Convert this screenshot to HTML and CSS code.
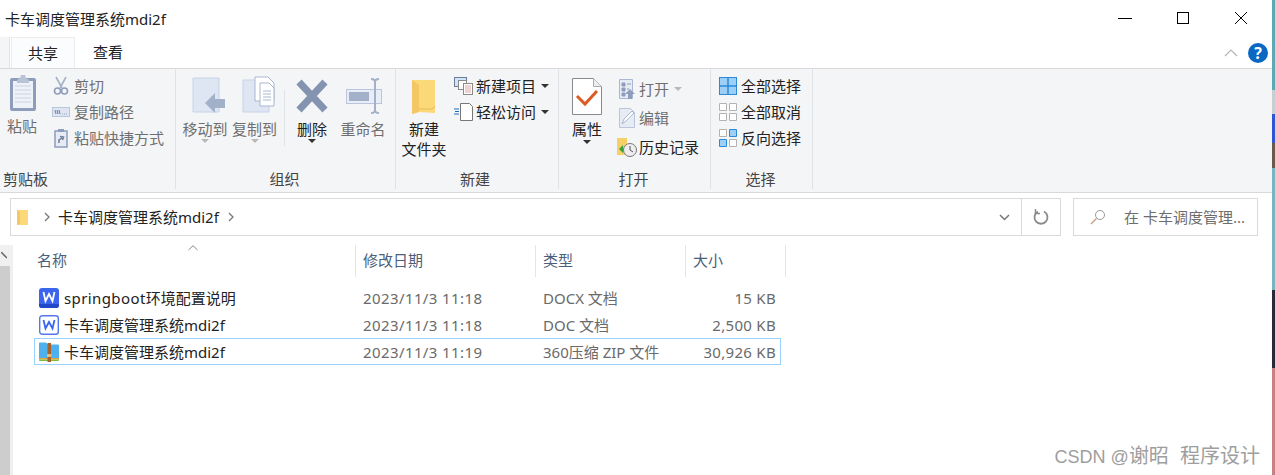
FILE: index.html
```html
<!DOCTYPE html>
<html lang="zh-CN">
<head>
    <meta charset="UTF-8">
    <title>卡车调度管理系统mdi2f</title>
    <link rel="stylesheet" href="styles.css">
</head>
<body>
    <div class="desktop">
        <div class="window">
            <div class="titlebar">
                <span class="title">卡车调度管理系统mdi2f</span>
                <div class="controls">
                    <svg width="58" height="24" viewBox="0 0 58 24"><path d="M22 12.5h14" stroke="#000" stroke-width="1"/></svg>
                    <svg width="58" height="24" viewBox="0 0 58 24"><rect x="23.5" y="6.5" width="11" height="11" fill="none" stroke="#000"/></svg>
                    <svg width="58" height="24" viewBox="0 0 58 24"><path d="M23 6l12 12M35 6L23 18" stroke="#000" fill="none"/></svg>
                </div>
            </div>

            <div class="tabs">
                <div class="tab-stub"></div>
                <div class="tab active">共享</div>
                <div class="tab">查看</div>
                <div class="tabs-right">
                    <svg width="14" height="8" viewBox="0 0 14 8"><path d="M1 7l6-6 6 6" fill="none" stroke="#b5b5b5" stroke-width="1.2"/></svg>
                    <span class="help">?</span>
                </div>
            </div>

            <div class="ribbon">
                <section class="group group-clip">
                    <div class="group-body">
                        <div class="big big-paste">
                            <svg width="28" height="38" viewBox="0 0 28 38"><rect x="1" y="4" width="26" height="33" rx="2" fill="#8d9dbb"/><rect x="4" y="7" width="20" height="27" fill="#eef1f7"/><path d="M6 12h16M6 16h16M6 20h16M6 24h16M6 28h16" stroke="#ccd4e4"/><path d="M8 6l3-2 1-3h4l1 3 3 2v3H8z" fill="#b9c3d6"/></svg>
                            <span class="muted">粘贴</span>
                        </div>
                        <div class="small-col">
                            <div class="small muted">
                                <svg width="16" height="20" viewBox="0 0 16 20"><path d="M3 1l6 11M13 1L7 12" stroke="#a6b2c8" stroke-width="1.6" fill="none"/><circle cx="4.5" cy="15" r="3" fill="none" stroke="#8d9dbb" stroke-width="1.6"/><circle cx="11.500" cy="15" r="3" fill="none" stroke="#8d9dbb" stroke-width="1.6"/></svg>
                                剪切
                            </div>
                            <div class="small muted">
                                <svg width="18" height="12" viewBox="0 0 18 12"><rect x=".5" y="1.500" width="17" height="9" fill="#dfe6f2" stroke="#b9c5da"/><path d="M3 4l1 4M5 4l1 4M7 4l1 4" stroke="#6d7d99"/><path d="M10 8h1M12 8h1M14 8h1" stroke="#8d9dbb"/></svg>
                                复制路径
                            </div>
                            <div class="small muted">
                                <svg width="14" height="20" viewBox="0 0 14 20"><rect x="1" y="3" width="12" height="16" fill="#e6ebf4" stroke="#8d9dbb" stroke-width="1.500"/><rect x="4" y="1" width="6" height="3" fill="#8d9dbb"/><path d="M5 15v-3l3-2M6 8.500l3.500.5-1 3" fill="none" stroke="#6d7d99" stroke-width="1.500"/></svg>
                                粘贴快捷方式
                            </div>
                        </div>
                    </div>
                    <div class="group-label group-label-left">剪贴板</div>
                </section>

                <section class="group group-org">
                    <div class="group-body">
                        <div class="big big-org muted">
                            <svg class="shift" width="36" height="40" viewBox="0 0 36 40"><path d="M2 2h26v34H2z" fill="#dfe6f3" stroke="#c7d3e6"/><path d="M14 27l10-10v6h10v9H24v5z" fill="#a2b0ca"/></svg>
                            <span>移动到</span>
                            <i class="caret caret-light"></i>
                        </div>
                        <div class="big big-org big-copy muted">
                            <svg class="shift" width="36" height="40" viewBox="0 0 36 40"><path d="M2 4h26v32H2z" fill="#dfe6f3" stroke="#c7d3e6"/><path d="M14 1h13l6 6v18H14z" fill="#fff" stroke="#a9b7d0"/><path d="M19 7h9l5 5v18H19z" fill="#fff" stroke="#a9b7d0"/><path d="M22 15h8M22 18h8M22 21h8M22 24h8" stroke="#a9b7d0"/></svg>
                            <span>复制到</span>
                            <i class="caret caret-light"></i>
                        </div>
                        <div class="vsep"></div>
                        <div class="big big-org big-del">
                            <svg width="34" height="40" viewBox="0 0 34 40"><path d="M4 6l26 28M30 6L4 34" stroke="#8494b0" stroke-width="7"/></svg>
                            <span>删除</span>
                            <i class="caret"></i>
                        </div>
                        <div class="big big-org muted">
                            <svg class="shift-small" width="38" height="40" viewBox="0 0 38 40"><rect x="1.500" y="13.500" width="35" height="14" fill="#e8edf7" stroke="#b9c5da"/><rect x="4" y="16" width="20" height="9" fill="#a2b0ca"/><path d="M26 3c3 0 4 1 4 3v28c0 2 1 3 4 3M34 3c-3 0-4 1-4 3M30 34c0 2-1 3-4 3" fill="none" stroke="#a2b0ca" stroke-width="2"/></svg>
                            <span>重命名</span>
                        </div>
                    </div>
                    <div class="group-label">组织</div>
                </section>

                <section class="group group-new">
                    <div class="group-body">
                        <div class="big big-folder">
                            <svg width="26" height="36" viewBox="0 0 26 36"><path d="M1 1h23v33l-16-1-7 2z" fill="#fbd978"/><path d="M8 6L1 1v34l7-2z" fill="#f3c763"/><path d="M24 27l-3 3H8" fill="none" stroke="#e7b955"/></svg>
                            <span>新建<br>文件夹</span>
                        </div>
                        <div class="small-col small-col-new">
                            <div class="small">
                                <svg width="20" height="18" viewBox="0 0 20 18"><rect x=".5" y=".5" width="12" height="9" fill="#cfe4f7" stroke="#6d7d99"/><rect x="4.500" y="3.500" width="8" height="9" fill="#fff" stroke="#8a8a8a"/><rect x="9.500" y="6.500" width="9" height="11" fill="#fff" stroke="#8a8a8a"/><path d="M11 9h6M11 11h6M11 13h6M11 15h6" stroke="#e0a5a5"/></svg>
                                新建项目<i class="caret caret-inline"></i>
                            </div>
                            <div class="small">
                                <svg width="20" height="18" viewBox="0 0 20 18"><path d="M6.500.5h9l3 3v14h-12z" fill="#fff" stroke="#777"/><path d="M0 6h5M1 8.500h4M0 11h5" stroke="#1b6fc2"/></svg>
                                轻松访问<i class="caret caret-inline"></i>
                            </div>
                        </div>
                    </div>
                    <div class="group-label">新建</div>
                </section>

                <section class="group group-open">
                    <div class="group-body">
                        <div class="big big-prop">
                            <svg width="30" height="37" viewBox="0 0 30 37"><path d="M.5.500h21l8 8v28H.5z" fill="#fff" stroke="#8a8a8a"/><path d="M21.500.500v8h8" fill="#eee" stroke="#aaa"/><path d="M5 18l8 8 12-13" fill="none" stroke="#dd5a25" stroke-width="3"/></svg>
                            <span>属性</span>
                            <i class="caret"></i>
                        </div>
                        <div class="small-col small-col-open">
                            <div class="small muted">
                                <svg width="16" height="20" viewBox="0 0 16 20"><path d="M.5.500h13v19H.5z" fill="#e6ebf4" stroke="#a9b7d0"/><path d="M3 4h3v3H3zM3 9h3v3H3zM3 14h3v3H3zM8 5h4M8 10h2" stroke="#8d9dbb" fill="#8d9dbb"/><path d="M11 10l5 5h-3v5H9v-5H6z" fill="#8d9dbb"/></svg>
                                打开<i class="caret caret-inline caret-light"></i>
                            </div>
                            <div class="small muted">
                                <svg width="16" height="20" viewBox="0 0 16 20"><path d="M.5.500h11l4 4v15H.5z" fill="#e6ebf4" stroke="#b9c5da"/><path d="M3 16l2-5 8-8 2 2-8 8z" fill="#fff" stroke="#a9b7d0"/></svg>
                                编辑
                            </div>
                            <div class="small">
                                <svg width="20" height="20" viewBox="0 0 20 20"><path d="M0 1h10v17H0z" fill="#f7cf67"/><circle cx="13" cy="13" r="6.500" fill="#eee" stroke="#777"/><path d="M13 9v4l3 2" fill="none" stroke="#555"/><path d="M2 12l4-4v8z" fill="#3aa23a"/></svg>
                                历史记录
                            </div>
                        </div>
                    </div>
                    <div class="group-label">打开</div>
                </section>

                <section class="group group-select">
                    <div class="group-body">
                        <div class="small-col small-col-select">
                            <div class="small">
                                <svg width="18" height="18" viewBox="0 0 18 18"><rect x=".5" y=".5" width="17" height="17" fill="#9ed0f7" stroke="#2a8ad8"/><path d="M9 0v18M0 9h18" stroke="#2a8ad8" stroke-width="1.500"/></svg>
                                全部选择
                            </div>
                            <div class="small">
                                <svg width="18" height="18" viewBox="0 0 18 18"><path d="M.5.500h7v7h-7zM10.500.500h7v7h-7zM.5 10.500h7v7h-7zM10.500 10.500h7v7h-7z" fill="#fff" stroke="#b3b3b3"/></svg>
                                全部取消
                            </div>
                            <div class="small">
                                <svg width="18" height="18" viewBox="0 0 18 18"><path d="M.5.500h7v7h-7zM10.500 10.500h7v7h-7z" fill="#fff" stroke="#b3b3b3"/><path d="M10.500.500h7v7h-7zM.5 10.500h7v7h-7z" fill="#9ed0f7" stroke="#2a8ad8"/></svg>
                                反向选择
                            </div>
                        </div>
                    </div>
                    <div class="group-label">选择</div>
                </section>
            </div>

            <div class="addressrow">
                <div class="address">
                    <svg class="addr-folder" width="13" height="17" viewBox="0 0 13 17"><path d="M1 1h11v15H1z" fill="#fbd978"/><path d="M4 3L1 1v15l3-1z" fill="#f3c763"/></svg>
                    <svg class="addr-chev" width="6" height="10" viewBox="0 0 6 10"><path d="M1 1l4 4-4 4" fill="none" stroke="#777" stroke-width="1.300"/></svg>
                    <span class="addr-text">卡车调度管理系统mdi2f</span>
                    <svg class="addr-chev2" width="6" height="10" viewBox="0 0 6 10"><path d="M1 1l4 4-4 4" fill="none" stroke="#777" stroke-width="1.300"/></svg>
                    <svg class="addr-down" width="11" height="7" viewBox="0 0 11 7"><path d="M1 1l4.500 4.500L10 1" fill="none" stroke="#777" stroke-width="1.500"/></svg>
                    <div class="addr-refresh">
                        <svg width="16" height="16" viewBox="0 0 16 16"><path d="M5 2.500a6.500 6.500 0 1 0 6 0" fill="none" stroke="#8a8a8a" stroke-width="1.800"/><path d="M2.500 0v4.500H7" fill="none" stroke="#8a8a8a" stroke-width="1.500"/></svg>
                    </div>
                </div>
                <div class="search">
                    <svg width="16" height="16" viewBox="0 0 16 16"><circle cx="10" cy="6" r="4.500" fill="none" stroke="#9a9a9a"/><path d="M6.500 9.500L1 15" stroke="#c99a7a" stroke-width="1.200"/></svg>
                    <span>在 卡车调度管理...</span>
                </div>
            </div>

            <div class="content">
                <div class="navstrip">
                    <div class="nav-up">
                        <svg width="6" height="7" viewBox="0 0 6 7"><path d="M0 0l6 6" stroke="#666" stroke-width="1.500"/></svg>
                    </div>
                </div>
                <div class="navgap"></div>
                <div class="files">
                    <div class="header">
                        <div class="col-h col-name">名称
                            <svg class="sort" width="10" height="6" viewBox="0 0 10 6"><path d="M.5 5L5 .7 9.500 5" fill="none" stroke="#888"/></svg>
                        </div>
                        <div class="col-h">修改日期</div>
                        <div class="col-h">类型</div>
                        <div class="col-h">大小</div>
                    </div>
                    <div class="rows">
                        <div class="row">
                            <div class="cell-name">
                                <svg width="20" height="20" viewBox="0 0 20 20"><rect width="20" height="20" rx="3" fill="#3c65ee"/><path d="M0 16h20v1a3 3 0 0 1-3 3H3a3 3 0 0 1-3-3z" fill="#2148c9"/><path d="M4.500 4l2 9L10 6l3.500 7 2-9" fill="none" stroke="#fff" stroke-width="1.800"/></svg>
                                <span><span class="latin">springboot</span>环境配置说明</span>
                            </div>
                            <div class="cell date">2023/11/3 11:18</div>
                            <div class="cell">DOCX 文档</div>
                            <div class="cell size">15 KB</div>
                        </div>
                        <div class="row">
                            <div class="cell-name">
                                <svg width="20" height="20" viewBox="0 0 20 20"><rect x=".7" y=".7" width="18.600" height="18.600" rx="2.500" fill="#fff" stroke="#5577ee" stroke-width="1.400"/><path d="M4.500 5l2 8.500L10 7l3.500 6.500 2-8.500" fill="none" stroke="#3c65ee" stroke-width="1.800"/></svg>
                                <span>卡车调度管理系统mdi2f</span>
                            </div>
                            <div class="cell date">2023/11/3 11:18</div>
                            <div class="cell">DOC 文档</div>
                            <div class="cell size">2,500 KB</div>
                        </div>
                        <div class="row selected">
                            <div class="cell-name">
                                <svg width="20" height="20" viewBox="0 0 20 20"><path d="M0 1.500a1 1 0 0 1 1-1h6l2 2h10a1 1 0 0 1 1 1V16H0z" fill="#4fb0ee"/><path d="M0 16h20v1.500H0z" fill="#e8a33c"/><path d="M0 17.500h20V18a1 1 0 0 1-1 1H1a1 1 0 0 1-1-1z" fill="#7dbb3c"/><rect x="8.500" y="1" width="3.500" height="19" fill="#a9612a"/><rect x="8" y="12" width="4.500" height="3" fill="#e9b872"/></svg>
                                <span>卡车调度管理系统mdi2f</span>
                            </div>
                            <div class="cell date">2023/11/3 11:19</div>
                            <div class="cell">360压缩 ZIP 文件</div>
                            <div class="cell size">30,926 KB</div>
                        </div>
                    </div>
                </div>
                <div class="watermark"><span class="wm-latin">CSDN @</span>谢昭&nbsp; 程序设计</div>
            </div>
        </div>
        <div class="wallpaper"></div>
    </div>
</body>
</html>
```

FILE: styles.css
```css
* {
    box-sizing: border-box;
}

html, body {
    margin: 0;
    height: 100%;
    overflow: hidden;
}

body {
    font-family: "Noto Sans", "Noto Sans CJK SC", sans-serif;
    font-size: 15px;
    line-height: 20px;
    color: #222;
    background: #fff;
}

svg {
    flex: none;
    display: block;
}

.desktop {
    display: flex;
    height: 475px;
}

.window {
    width: 1272px;
    flex: none;
    display: flex;
    flex-direction: column;
    background: #fff;
}

.wallpaper {
    flex: 1;
    background: linear-gradient(to bottom,
        #5ea7b5 0, #5ea7b5 90px,
        #c9ced2 90px, #c9ced2 114px,
        #2f55d4 114px, #2f55d4 143px,
        #6b5a48 143px, #6b5a48 168px,
        #79b5c0 168px, #79b5c0 290px,
        #2a2a3a 290px, #2a2a3a 368px,
        #c98080 368px, #c98080 475px);
}

/* title bar */
.titlebar {
    height: 37px;
    flex: none;
    display: flex;
    align-items: center;
    justify-content: space-between;
    padding-left: 5px;
}

.controls {
    display: flex;
    margin-right: 2px;
    margin-top: -1px;
}

/* tabs */
.tabs {
    height: 32px;
    flex: none;
    display: flex;
    border-bottom: 1px solid #d9d9d9;
}

.tab-stub {
    width: 10px;
    border-right: 1px solid #e5e5e5;
    background: #f4f5f7;
}

.tab {
    width: 64px;
    text-align: center;
    line-height: 31px;
    margin-right: 1px;
}

.tab.active {
    margin-left: 1px;
    border: 1px solid #ececec;
    border-bottom: none;
    background: #fbfcfd;
}

.tabs-right {
    margin-left: auto;
    display: flex;
    align-items: center;
    gap: 10px;
    padding-right: 4px;
}

.help {
    width: 20px;
    height: 20px;
    border-radius: 50%;
    background: #0a67c2;
    color: #fff;
    font-weight: bold;
    font-size: 16px;
    line-height: 20px;
    text-align: center;
}

/* ribbon */
.ribbon {
    height: 124px;
    flex: none;
    display: flex;
    background: #f4f5f7;
    border-bottom: 1px solid #d9d9d9;
}

.group {
    flex: none;
    display: flex;
    flex-direction: column;
    padding-top: 3px;
    border-right: 1px solid #dfe2e6;
    margin-bottom: 3px;
}

.group-clip { width: 176px; }
.group-org { width: 220px; }
.group-new { width: 163px; }
.group-open { width: 152px; }
.group-select { width: 102px; }

.group-body {
    flex: 1;
    display: flex;
}

.group-label {
    height: 20px;
    line-height: 20px;
    text-align: center;
    color: #444;
    padding-right: 2px;
}

.group-new .group-label {
    padding-right: 4px;
}

.group-label-left {
    text-align: left;
    padding-left: 3px;
}

.muted {
    color: #6f6f6f;
}

.big {
    display: flex;
    flex-direction: column;
    align-items: center;
    position: relative;
    text-align: center;
}

.big-paste {
    width: 44px;
    padding: 2px 0 0 2px;
    gap: 4px;
}

.big-paste span {
    margin-left: -2px;
}

.big-org {
    width: 50px;
    padding-top: 4px;
    gap: 3px;
}

.big-copy {
    width: 49px;
}

.big-org .shift {
    margin-left: 8px;
}

.big-org .shift-small {
    margin-left: 1px;
}

.big-del {
    width: 52px;
    color: #222;
}

.group-org .group-body {
    padding-left: 4px;
}

.vsep {
    width: 1px;
    height: 56px;
    background: #dfe2e6;
    margin: 18px 1px 0 5px;
}

.big-folder {
    width: 56px;
    padding-top: 7px;
    gap: 4px;
}

.big-prop {
    width: 56px;
    padding-top: 6px;
    gap: 4px;
}

.caret {
    display: block;
    width: 0;
    height: 0;
    border: 4px solid transparent;
    border-top-color: #333;
    border-bottom: none;
    margin-top: -3px;
}

.caret-light {
    border-top-color: #b9b9b9;
}

.caret-inline {
    margin: 0 0 0 3px;
}

.small-col {
    display: flex;
    flex-direction: column;
    padding-top: 2px;
}

.small {
    display: flex;
    align-items: center;
    height: 26px;
    gap: 4px;
    white-space: nowrap;
}

.group-clip .small-col {
    padding-left: 8px;
    padding-top: 1px;
}

.group-clip .small svg {
    width: 18px;
}

.small-col-new {
    margin-left: 2px;
    padding-top: 1px;
}

.small-col-new .small {
    gap: 2px;
}

.small-col-open {
    margin-left: 2px;
    padding-top: 2px;
}

.small-col-open .small {
    height: 29px;
    gap: 2px;
}

.small-col-open .small svg {
    width: 20px;
}

.small-col-select {
    padding-left: 8px;
    padding-top: 1px;
}

/* address bar */
.addressrow {
    height: 44px;
    flex: none;
    display: flex;
    align-items: center;
    padding: 4px 14px 0 10px;
    gap: 12px;
}

.address {
    width: 1051px;
    height: 38px;
    display: flex;
    align-items: center;
    border: 1px solid #d9d9d9;
    padding-left: 5px;
}

.addr-chev {
    margin-left: 15px;
}

.addr-text {
    margin-left: 8px;
}

.addr-chev2 {
    margin-left: 9px;
}

.addr-down {
    margin-left: auto;
    margin-right: 11px;
}

.addr-refresh {
    width: 39px;
    height: 100%;
    display: flex;
    align-items: center;
    justify-content: center;
    border-left: 1px solid #d9d9d9;
}

.search {
    flex: 1;
    height: 38px;
    display: flex;
    align-items: center;
    gap: 18px;
    border: 1px solid #d9d9d9;
    padding-left: 16px;
    color: #6d6d6d;
    white-space: nowrap;
}

/* file list */
.content {
    flex: 1;
    display: flex;
    position: relative;
    padding-top: 8px;
}

.navstrip {
    width: 10px;
    background: #cdcdcd;
    flex: none;
}

.nav-up {
    height: 21px;
    background: #f0f0f0;
    padding: 7px 0 0 1px;
}

.navgap {
    width: 3px;
    background: #f0f0f0;
    flex: none;
}

.files {
    flex: 1;
    padding-left: 21px;
}

.header {
    display: grid;
    grid-template-columns: 322px 180px 150px 100px;
    height: 32px;
}

.col-h {
    position: relative;
    color: #4c607a;
    line-height: 30px;
    padding-left: 7px;
    border-right: 1px solid #e5e5e5;
}

.col-h.col-name {
    padding-left: 3px;
}

.sort {
    position: absolute;
    left: 154px;
    top: 0;
}

.rows {
    margin-top: 7px;
    width: 747px;
}

.row {
    display: grid;
    grid-template-columns: 321px 180px 150px 96px;
    height: 27px;
    align-items: center;
    border: 1px solid transparent;
    color: #6a6a6a;
}

.row.selected {
    border-color: #99d1ff;
}

.cell-name {
    display: flex;
    align-items: center;
    gap: 5px;
    padding-left: 4px;
    color: #222;
}

.latin {
    letter-spacing: .4px;
}

.cell {
    padding-left: 7px;
    white-space: nowrap;
}

.cell.date {
    letter-spacing: .4px;
}

.cell.size {
    text-align: right;
    padding-right: 6px;
    letter-spacing: .3px;
}

.watermark {
    position: absolute;
    right: 12px;
    bottom: 7px;
    font-family: "Liberation Sans", "Noto Sans CJK SC", sans-serif;
    font-size: 20px;
    line-height: 22px;
    color: #9e9e9e;
}

.wm-latin {
    font-size: 18px;
}
```
